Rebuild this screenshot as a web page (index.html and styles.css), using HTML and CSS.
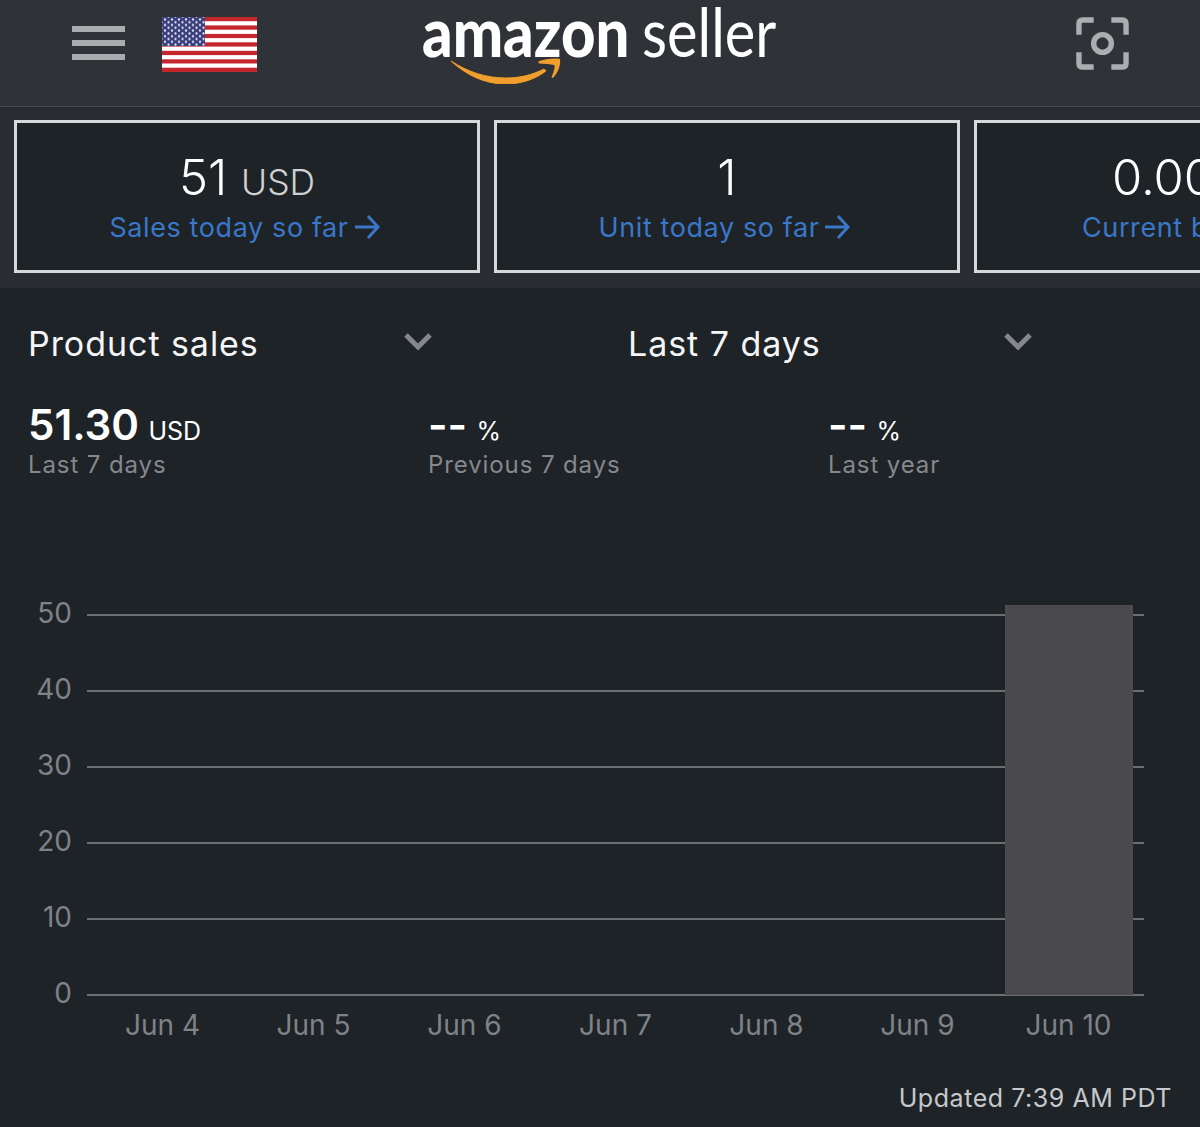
FILE: index.html
```html
<!DOCTYPE html>
<html lang="en">
<head>
    <meta charset="UTF-8">
    <meta name="viewport" content="width=device-width, initial-scale=1.0">
    <title>Amazon Seller</title>
    <link rel="stylesheet" href="styles.css">
</head>
<body>

<header class="top-bar">
    <div class="menu-icon"><span></span><span></span><span></span></div>
    <svg class="flag" viewBox="0 0 95 55" width="95" height="55">
        <defs>
            <pattern id="stars" x="1" y="1" width="7" height="5.6" patternUnits="userSpaceOnUse">
                <circle cx="2" cy="1.4" r="1.1" fill="#e8eaf4"/>
                <circle cx="5.5" cy="4.2" r="1.1" fill="#e8eaf4"/>
            </pattern>
        </defs>
        <rect width="95" height="55" fill="#c4262e"/>
        <g fill="#fff">
            <rect y="4.2" width="95" height="4.2"/>
            <rect y="12.7" width="95" height="4.2"/>
            <rect y="21.1" width="95" height="4.2"/>
            <rect y="29.6" width="95" height="4.2"/>
            <rect y="38.1" width="95" height="4.2"/>
            <rect y="46.5" width="95" height="4.2"/>
        </g>
        <rect width="43" height="29" fill="#3a3f7d"/>
        <rect width="43" height="29" fill="url(#stars)"/>
    </svg>
    <div class="logo">
        <span class="logo-amazon">amazon</span><span class="logo-seller">seller</span>
        <svg class="logo-smile" viewBox="0 0 112 26" width="112" height="26">
            <path d="M1 3C18 14 36 20 56 20C70 20 82 17 94 11L96 13C84 22 70 26 55 26C34 26 15 16 1 3Z" fill="#f09e2c" stroke="#f09e2c" stroke-width="1"/>
            <path d="M88 3.500C95 1 104 0 110 1C111 7 108 15 103 20C102 20 101 19 102 18C104 13 105 10 104.500 7C100 6 95 6 89 5.500Z" fill="#f09e2c"/>
        </svg>
    </div>
    <svg class="scan-icon" viewBox="0 0 54 54" width="53" height="53" fill="none" stroke="#abaeb1" stroke-width="5.500">
        <path d="M18 3H7Q3 3 3 7V18"/>
        <path d="M36 3H47Q51 3 51 7V18"/>
        <path d="M18 51H7Q3 51 3 47V36"/>
        <path d="M36 51H47Q51 51 51 47V36"/>
        <circle cx="27" cy="27" r="9"/>
    </svg>
</header>

<section class="cards">
    <div class="card">
        <div class="card-value">51 <small>USD</small></div>
        <a class="card-link">Sales today so far<svg class="arrow" viewBox="0 0 26 24" width="26" height="24"><path d="M1 12H24M14 1L24 12L14 23"/></svg></a>
    </div>
    <div class="card">
        <div class="card-value">1</div>
        <a class="card-link">Unit today so far<svg class="arrow" viewBox="0 0 26 24" width="26" height="24"><path d="M1 12H24M14 1L24 12L14 23"/></svg></a>
    </div>
    <div class="card">
        <div class="card-value">0.00 <small>USD</small></div>
        <a class="card-link">Current balance<svg class="arrow" viewBox="0 0 26 24" width="26" height="24"><path d="M1 12H24M14 1L24 12L14 23"/></svg></a>
    </div>
</section>

<main class="content">
    <div class="selectors">
        <div class="selector">
            <span>Product sales</span>
            <svg class="chevron" viewBox="0 0 28 18" width="28" height="18"><path d="M2 2L14 14L26 2"/></svg>
        </div>
        <div class="selector">
            <span>Last 7 days</span>
            <svg class="chevron" viewBox="0 0 28 18" width="28" height="18"><path d="M2 2L14 14L26 2"/></svg>
        </div>
    </div>

    <div class="stats">
        <div class="stat">
            <div class="stat-value"><b>51.30</b> <small>USD</small></div>
            <div class="stat-label">Last 7 days</div>
        </div>
        <div class="stat">
            <div class="stat-value"><b>--</b> <small>%</small></div>
            <div class="stat-label">Previous 7 days</div>
        </div>
        <div class="stat">
            <div class="stat-value"><b>--</b> <small>%</small></div>
            <div class="stat-label">Last year</div>
        </div>
    </div>

    <div class="chart">
        <div class="plot">
            <div class="row"><span class="tick">50</span><div class="grid-line"></div></div>
            <div class="row"><span class="tick">40</span><div class="grid-line"></div></div>
            <div class="row"><span class="tick">30</span><div class="grid-line"></div></div>
            <div class="row"><span class="tick">20</span><div class="grid-line"></div></div>
            <div class="row"><span class="tick">10</span><div class="grid-line"></div></div>
            <div class="row"><span class="tick">0</span><div class="grid-line"></div></div>
            <div class="bar"></div>
        </div>
        <div class="x-axis">
            <span>Jun 4</span>
            <span>Jun 5</span>
            <span>Jun 6</span>
            <span>Jun 7</span>
            <span>Jun 8</span>
            <span>Jun 9</span>
            <span>Jun 10</span>
        </div>
    </div>

    <div class="updated">Updated 7:39 AM PDT</div>
</main>

</body>
</html>
```

FILE: styles.css
```css
* {
    box-sizing: border-box;
}
html, body {
    height: 100%;
}
body {
    margin: 0;
    background: #1e2327;
    font-family: 'Inter', 'Liberation Sans', sans-serif;
    overflow: hidden;
    display: flex;
    flex-direction: column;
}

/* top bar */
.top-bar {
    height: 107px;
    flex: none;
    background: #2f3236;
    border-bottom: 1px solid #47494c;
    display: flex;
    align-items: flex-start;
    padding: 17px 0 0 72px;
}
.menu-icon {
    width: 53px;
    margin-top: 9px;
    display: flex;
    flex-direction: column;
    gap: 8px;
}
.menu-icon span {
    display: block;
    height: 6px;
    background: #a9acae;
}
.flag {
    margin-left: 37px;
}
.logo {
    position: relative;
    flex: none;
    width: 400px;
    margin: -17px 0 0 165px;
    height: 89px;
    white-space: nowrap;
    color: #fff;
    font-family: 'Lato', sans-serif;
    font-size: 68px;
    line-height: 62px;
}
.logo-amazon,
.logo-seller {
    display: inline-block;
    transform-origin: left center;
}
.logo-amazon {
    font-weight: 900;
    transform: scaleX(0.88);
    margin-right: -16px;
}
.logo-seller {
    font-weight: 400;
    transform: scaleX(0.85);
}
.logo-smile {
    position: absolute;
    left: 28px;
    top: 58px;
}
.scan-icon {
    margin-left: 254px;
}

/* summary cards */
.cards {
    flex: none;
    height: 181px;
    background: #292c32;
    padding: 13px 0 0 14px;
    display: flex;
    gap: 14px;
    overflow: hidden;
}
.card {
    flex: none;
    width: 466px;
    height: 153px;
    border: 3px solid #d5d7d9;
    background: #1e2327;
    text-align: center;
    white-space: nowrap;
    padding-top: 24px;
}
.card-value {
    color: #fff;
    font-size: 49px;
    font-weight: 300;
    line-height: 62px;
    height: 65px;
}
.card-value small {
    font-size: 35.5px;
    color: #cfd1d3;
}
.card-link {
    display: flex;
    justify-content: center;
    align-items: center;
    gap: 5px;
    color: #3a77c8;
    font-size: 27px;
    line-height: 32px;
    letter-spacing: 0.6px;
    padding-right: 5px;
}
.arrow {
    fill: none;
    stroke: #3a77c8;
    stroke-width: 3;
    margin-bottom: 3px;
}

/* selectors and stats */
.content {
    flex: 1;
    padding-top: 33px;
}
.selectors {
    display: flex;
    padding-left: 28px;
}
.selector {
    flex: none;
    width: 600px;
    display: flex;
    justify-content: space-between;
    align-items: center;
    padding-right: 196px;
    color: #f5f5f6;
    font-size: 34px;
    line-height: 46px;
    letter-spacing: 0.95px;
}
.chevron {
    fill: none;
    stroke: #85888b;
    stroke-width: 5;
    margin-bottom: 5px;
}
.stats {
    display: flex;
    padding-left: 28px;
    margin-top: 31px;
}
.stat {
    flex: none;
    width: 400px;
}
.stat-value {
    color: #fff;
    line-height: 54px;
    height: 52px;
}
.stat-value b {
    font-size: 42px;
    font-weight: 600;
}
.stat-value small {
    font-size: 25px;
    margin-left: 5px;
}
.stat-label {
    color: #85888c;
    font-size: 24px;
    line-height: 30px;
    letter-spacing: 0.9px;
}

/* chart */
.chart {
    margin-top: 97px;
    padding-right: 56px;
}
.plot {
    position: relative;
}
.row {
    display: flex;
    align-items: center;
    height: 76px;
}
.tick {
    width: 72px;
    text-align: right;
    color: #7f8286;
    font-size: 28px;
    line-height: 30px;
    margin-bottom: 4px;
}
.grid-line {
    flex: 1;
    height: 2px;
    margin-left: 15px;
    background: #6b6e71;
}
.bar {
    position: absolute;
    left: 1005px;
    width: 128px;
    top: 28px;
    height: 390px;
    background: #4a494b;
}
.x-axis {
    display: flex;
    margin: -26px 0 0 87px;
}
.x-axis span {
    flex: 1;
    text-align: center;
    color: #7f8286;
    font-size: 28px;
    line-height: 36px;
}
.updated {
    margin-top: 39px;
    padding-right: 28px;
    text-align: right;
    color: #c6c8ca;
    font-size: 25px;
    line-height: 32px;
    letter-spacing: 0.55px;
}
```
